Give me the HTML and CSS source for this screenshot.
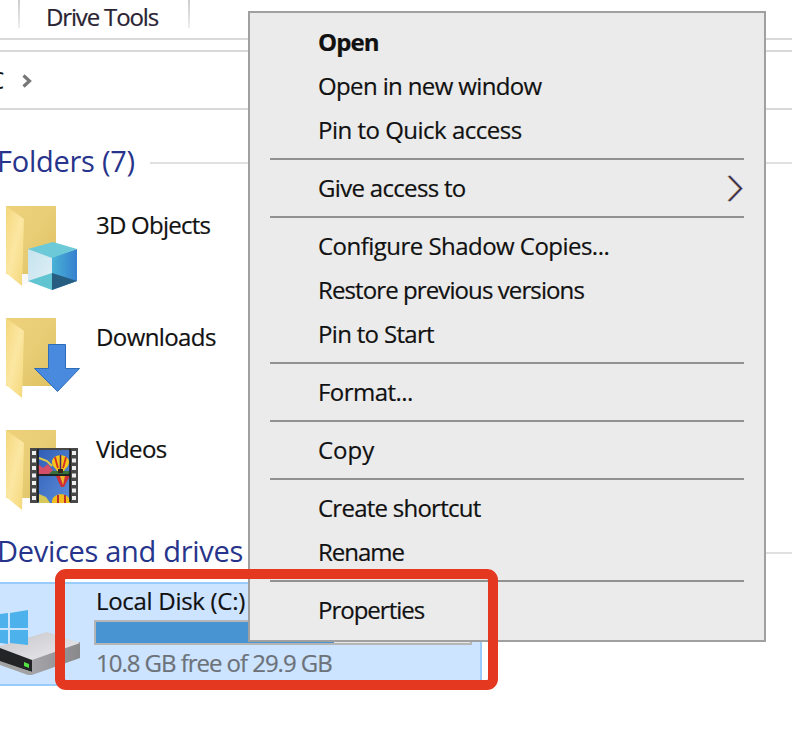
FILE: index.html
```html
<!DOCTYPE html>
<html lang="en">
<head>
<meta charset="utf-8">
<title>File Explorer</title>
<link rel="stylesheet" href="styles.css">
</head>
<body>
<div class="explorer">
  <header class="ribbon"><div class="tab">Drive Tools</div></header>
  <nav class="address">
    <span class="crumb">C</span>
    <svg class="crumb-arrow" width="10" height="14" viewBox="0 0 10 14"><path d="M1.500 1.500 7.500 7l-6 5.500" fill="none" stroke="#777" stroke-width="3.200"/></svg>
  </nav>
  <main class="content">
    <h2 class="group folders-title"><span>Folders (7)</span></h2>
    <ul class="folders">
      <li class="folder">
        <svg class="icon" width="84" height="92" viewBox="0 0 84 92">
          <defs>
            <linearGradient id="back" x2="1" y2="1"><stop stop-color="#edd27b"/><stop offset=".5" stop-color="#e8cd76"/><stop offset="1" stop-color="#dfc05d"/></linearGradient>
            <linearGradient id="flap" x2="1" y2="1"><stop stop-color="#f4d77d"/><stop offset=".5" stop-color="#fce7a2"/><stop offset="1" stop-color="#f2d779"/></linearGradient>
            <linearGradient id="right"><stop stop-color="#48b3d5"/><stop offset="1" stop-color="#367fcf"/></linearGradient>
            <linearGradient id="left" y2="1"><stop stop-color="#c4e4ef"/><stop offset="1" stop-color="#e2eff6"/></linearGradient>
          </defs>
          <path d="M6 6h50v68H6z" fill="url(#back)"/><path d="M6 6l18 13-2 67L6 73z" fill="url(#flap)"/>
          <path d="M22 74h7v8l-7 4z" fill="#f8f8f8"/>
          <path d="M28 49l24 8v33l-24-9z" fill="url(#left)"/><path d="M77 49l-25 8v33l25-9z" fill="url(#right)"/>
          <path d="M28 49l25-7 24 7-25 9z" fill="#6bc9d8"/><path d="M28 81l24-8v17z" fill="#61c5d1"/><path d="M52 73l25 8-25 9z" fill="#285d82"/>
        </svg><span class="name n-objects">3D Objects</span>
      </li>
      <li class="folder">
        <svg class="icon" width="84" height="92" viewBox="0 0 84 92">
          <path d="M6 6h50v68H6z" fill="url(#back)"/><path d="M6 6l18 13-2 67L6 73z" fill="url(#flap)"/>
          <path d="M48.500 32.500h17v24h14L57.500 79.500 34.500 56.500h14z" fill="#4a8ade" stroke="#2c6cb9"/>
        </svg><span class="name n-downloads">Downloads</span>
      </li>
      <li class="folder">
        <svg class="icon" width="84" height="92" viewBox="0 0 84 92">
          <defs><linearGradient id="sky" y2="1"><stop stop-color="#315eb5"/><stop offset="1" stop-color="#5b8edb"/></linearGradient>
          <g id="balloon"><path d="M0 7C0-2 17-2 17 7c0 5-4 6-5 9H5C4 13 0 12 0 7z" fill="#f8c41c"/><path d="M3 2c1 4 2 8 3 11M14 2c-1 4-2 8-3 11" fill="none" stroke="#d22d25" stroke-width="1.800"/><path d="M8.500 0v15" stroke="#4b285c" stroke-width="1.500"/><path d="M6 14h5v4H6z" fill="#38271c"/></g></defs>
          <path d="M6 6h50v68H6z" fill="url(#back)"/><path d="M6 6l18 13-2 67L6 73z" fill="url(#flap)"/>
          <path d="M30 24h48v55H30z" fill="#484848"/><path d="M38 26h32v24H38zM38 52h32v27H38z" fill="url(#sky)"/>
          <path d="M38 40l5 4 5-4 5 7 8 3H38z" fill="#d64e67"/><path d="M39 34l8 3 5 5" fill="none" stroke="#ddc84b" stroke-width="2"/>
          <path d="M52 47h18v4H48z" fill="#39713c"/>
          <use href="#balloon" x="52" y="31"/>
          <path d="M56 52h14l-4 7-2 4h-3l-2-4z" fill="#cd3135"/><path d="M60 52h5l-2 9z" fill="#edb72d"/>
          <path d="M39 70l7 3 4 6H39z" fill="#d7c957"/><path d="M52 77c1-9 17-9 18 0v2H52z" fill="#f2bd1d"/><path d="M58 71v8M65 71v8" stroke="#be3029" stroke-width="2"/>
          <path d="M34 27v50M74 27v50" stroke="#eee" stroke-width="4" stroke-dasharray="4 3.500"/>
          <path d="M38 25v53M70 25v53M38 51h32" stroke="#161616" stroke-width="1.500"/>
        </svg><span class="name n-videos">Videos</span>
      </li>
    </ul>
    <h2 class="group drives-title"><span>Devices and drives</span></h2>
    <section class="drive">
      <svg class="disk" width="85" height="92" viewBox="0 0 85 92">
        <defs><linearGradient id="side"><stop stop-color="#a6a6aa"/><stop offset="1" stop-color="#89898c"/></linearGradient>
        <linearGradient id="top" x2="1" y2="1"><stop stop-color="#c5c5c9"/><stop offset="1" stop-color="#ededf0"/></linearGradient></defs>
        <path d="M32 74l48-16v16L32 91z" fill="url(#side)"/>
        <path d="M0 62l47-14 33 11-48 17L0 65z" fill="url(#top)"/>
        <path d="M0 64l32 12v12L0 78z" fill="#222426"/><path d="M0 77l32 11v3h-4L0 81z" fill="#a2a2a2"/>
        <path d="M24 78l5 2v4l-5-2z" fill="#54e344"/>
        <path d="M0 30l8-1v15H0zM10 29l18-3v18H10zM0 46h8v14l-8-1zM10 46h18v15l-18-2z" fill="#4db2ec"/>
      </svg>
      <div class="drive-info">
        <span class="drive-name">Local Disk (C:)</span>
        <div class="capacity"><div class="used"></div></div>
        <span class="free">10.8 GB free of 29.9 GB</span>
      </div>
    </section>
  </main>
</div>
<div class="menu">
  <div class="item open">Open</div><div class="item i-window">Open in new window</div><div class="item i-quick">Pin to Quick access</div>
  <hr>
  <div class="item i-give"><span>Give access to</span><svg width="18" height="30" viewBox="0 0 18 30"><path d="M2 3l12 12.500L2 28" fill="none" stroke="#d99a50" stroke-width="1.800"/><path d="M4 3l12 12.500L4 28" fill="none" stroke="#5c8fe0" stroke-width="1.500"/><path d="M3 3l12 12.500L3 28" fill="none" stroke="#3d2845" stroke-width="1.500"/></svg></div>
  <hr>
  <div class="item i-config">Configure Shadow Copies...</div><div class="item i-restore">Restore previous versions</div><div class="item i-start">Pin to Start</div>
  <hr>
  <div class="item i-format">Format...</div>
  <hr>
  <div class="item i-copy">Copy</div>
  <hr>
  <div class="item i-create">Create shortcut</div><div class="item i-rename">Rename</div>
  <hr>
  <div class="item i-prop">Properties</div>
</div>
<div class="callout"></div>
</body>
</html>
```
FILE: styles.css
```css
* { box-sizing: border-box; }
body { margin: 0; width: 792px; height: 732px; overflow: hidden; position: relative; background: #fff; color: #111; font-family: "Open Sans", "Noto Sans", sans-serif; font-size: 24px; -webkit-text-stroke: 0.2px; }
.explorer { height: 732px; overflow: hidden; }
.ribbon { height: 40px; border-bottom: 2px solid #d9d9d9; padding-left: 18px; }
.tab { width: 172px; height: 28px; padding-left: 28px; line-height: 33px; letter-spacing: -1.15px; color: #292333; background: linear-gradient(#ccc, #eee) left / 2px 100% no-repeat, linear-gradient(#ccc, #eee) right / 2px 100% no-repeat; white-space: nowrap; }
.address { height: 60px; margin-top: 10px; border: solid #d9d9d9; border-width: 2px 0; display: flex; align-items: center; }
.crumb { width: 22px; height: 30px; line-height: 30px; text-indent: -11px; overflow: hidden; }
.crumb-arrow { margin-top: 2px; }
.content { padding-top: 30px; }
.group { margin: 0; height: 46px; line-height: 42px; font-size: 29px; font-weight: 400; letter-spacing: -0.25px; color: #27348b; display: flex; align-items: center; white-space: nowrap; -webkit-text-stroke: 0; }
.group span { flex: none; height: 46px; margin-left: -3px; }
.group::after { content: ""; flex: 1; height: 2px; margin-left: 15px; background: #e0e0e0; }
.folders { margin: 14px 0 0; padding: 0; list-style: none; }
.folder { height: 112px; display: flex; align-items: flex-start; }
.icon { flex: none; }
.name { margin-left: 12px; line-height: 32px; padding-top: 9px; }
.n-objects { letter-spacing: -0.75px; }
.n-downloads { letter-spacing: -0.6px; }
.n-videos { letter-spacing: -0.65px; }
.drives-title { margin-top: -6px; letter-spacing: -0.3px; }
.drive { width: 482px; height: 104px; margin-top: 6px; background: #cce4ff; border: 2px solid #99ccfb; border-left: 0; display: flex; }
.disk { flex: none; }
.drive-info { width: 378px; margin-left: 9px; display: flex; flex-direction: column; }
.drive-name { line-height: 32px; margin: 1px 0 3px 2px; letter-spacing: -0.3px; }
.capacity { height: 25px; border: 2px solid #b5b5b5; background: #e6e6e6; flex: none; }
.used { width: 238px; height: 100%; background: #4893d1; }
.free { line-height: 32px; margin: 2px 0 0 2px; color: #6d7279; letter-spacing: -1.03px; }
.menu { position: absolute; left: 248px; top: 11px; width: 518px; height: 631px; padding: 7px 20px 6px; background: #ebebeb; border: 2px solid #a0a0a0; }
.item { height: 44px; line-height: 44px; padding-left: 48px; white-space: nowrap; display: flex; justify-content: space-between; align-items: center; }
.menu hr { height: 14px; margin: 0; border: 0; background: linear-gradient(#919191, #919191) 0 6px / 100% 2px no-repeat; }
.open { font-weight: 700; letter-spacing: -0.9px; }
.i-window { letter-spacing: -0.63px; }
.i-quick { letter-spacing: -0.5px; }
.i-give { letter-spacing: -0.68px; }
.i-config { letter-spacing: -0.53px; }
.i-restore { letter-spacing: -0.9px; }
.i-start { letter-spacing: -0.68px; }
.i-format { letter-spacing: -0.55px; }
.i-copy { letter-spacing: 0; }
.i-create { letter-spacing: -0.75px; }
.i-rename { letter-spacing: -1px; }
.i-prop { letter-spacing: -1px; }
.callout { position: absolute; left: 55px; top: 569px; width: 443px; height: 121px; border: 10px solid #e43821; border-radius: 11px; }
```
